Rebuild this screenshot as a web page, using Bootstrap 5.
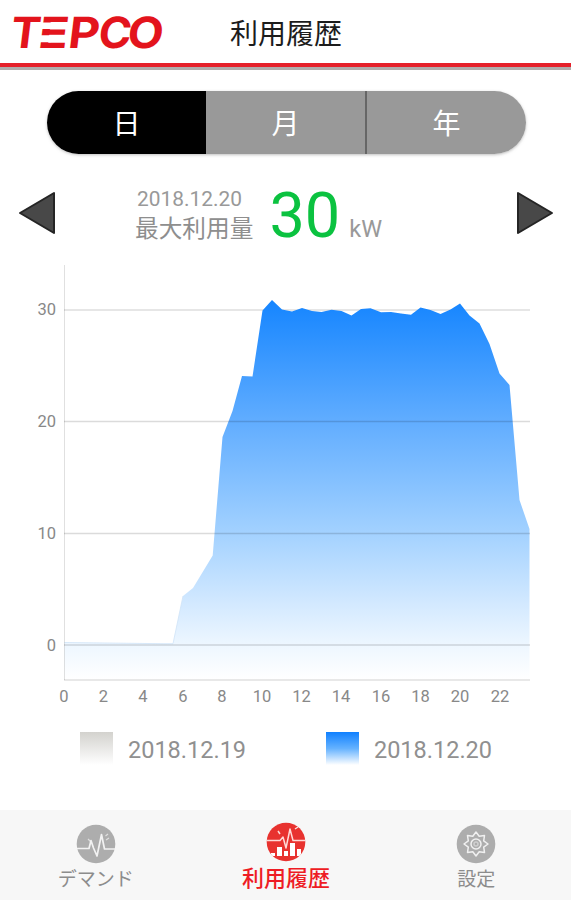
<!DOCTYPE html>
<html lang="ja">
<head>
<meta charset="utf-8">
<meta name="viewport" content="width=device-width, initial-scale=1">
<title>利用履歴</title>
<link href="https://cdn.jsdelivr.net/npm/bootstrap@5.3.0/dist/css/bootstrap.min.css" rel="stylesheet">
<style>
body{font-family:Roboto,"Noto Sans CJK JP",sans-serif;background:#fff;color:#999;height:900px;overflow:hidden}
.app-head{height:70px;border-bottom:3px solid #b0acac;background:#fff}
.head-in{height:67px;border-bottom:4px solid #e5202a;padding-left:12px}
.brand-mark{width:153px;height:60px}
.page-title{font-size:28px;line-height:1;color:#1c1c1c;margin-left:65px;padding-top:6px}
.period{height:63px;margin:21px 45px 0 47px;border-radius:32px;overflow:hidden;box-shadow:0 1px 3px #8888}
.period .btn{border:0;border-radius:0;background:#999;color:#fff;font-size:28px;line-height:1;flex:1 1 0;padding:5px 0 0}
.period .btn.active{background:#000;color:#fff}
.period .btn+.btn+.btn{border-left:2px solid #666}
.summary{height:106px;padding:12px 17px 0 18px}
.peak{padding-right:55px;margin-top:6px}
.peak-date{font-size:20.9px;line-height:25px;padding-left:2px}
.peak-label{font-size:23.7px;line-height:34px;color:#8e8e8e}
.peak-value{font-size:63px;line-height:64px;color:#0bc240;margin-left:16px}
.peak-unit{font-size:23.5px;line-height:30px;margin-left:9px;padding-top:26px}
.plot text{font-size:16.5px;fill:#888}
.legend-row{height:100px;padding:22px 79px 0 80px}
.swatch{width:33px;height:33px;margin-right:15px;background:linear-gradient(#d3d2ce,#fff)}
.swatch-now{background:linear-gradient(#0f80ff,#65b2ff 50%,#fff)}
.legend-text{font-size:23.5px;line-height:36px;color:#909090}
.tabs{height:90px;background:#f7f7f7}
.tab-item{color:#8c8c8c;font-size:19px;line-height:26px;padding:14px 0 0 1px;text-decoration:none}
.tab-item.active{color:#ee1c24;font-size:22px;font-weight:500;padding-top:12px}
.tab-item svg{width:40px;height:40px;margin-bottom:3px}
.tab-item.active svg{margin-bottom:4px}
</style>
</head>
<body class="d-flex flex-column">
<header class="app-head">
  <div class="head-in d-flex align-items-center">
    <svg class="brand-mark" viewBox="0 -12 153 60" overflow="visible" aria-label="TEPCO">
      <g transform="translate(0 34) skewX(-7)" font-family="Inter,sans-serif" font-weight="700" font-size="43" fill="#e3141c">
        <text x="-3" y="0" textLength="30" lengthAdjust="spacingAndGlyphs">T</text>
        <text x="25" y="0" textLength="30" lengthAdjust="spacingAndGlyphs">E</text>
        <path d="M24-25.500H38V-19H24ZM24-12.800H38V-5.800H24Z" fill="#fff"/>
        <text x="55" y="0" textLength="31" lengthAdjust="spacingAndGlyphs">P</text>
        <text x="85" y="0" textLength="33" lengthAdjust="spacingAndGlyphs">C</text>
        <text x="114" y="0" textLength="36" lengthAdjust="spacingAndGlyphs">O</text>
      </g>
    </svg>
    <h1 class="page-title mb-0 fw-normal">利用履歴</h1>
  </div>
</header>
<div class="period d-flex" role="group">
  <button class="btn active">日</button><button class="btn">月</button><button class="btn">年</button>
</div>
<section class="summary d-flex align-items-center justify-content-between">
  <svg width="38" height="44" viewBox="0 0 38 44"><path d="M2 22 36 2V42Z" fill="#484848" stroke="#252525" stroke-width="2" stroke-linejoin="round"/></svg>
  <div class="peak d-flex align-items-center">
    <div><div class="peak-date">2018.12.20</div><div class="peak-label">最大利用量</div></div>
    <div class="peak-value">30</div><div class="peak-unit">kW</div>
  </div>
  <svg width="38" height="44" viewBox="0 0 38 44"><path d="M36 22 2 2V42Z" fill="#484848" stroke="#252525" stroke-width="2" stroke-linejoin="round"/></svg>
</section>
<svg class="plot flex-shrink-0" width="571" height="450" viewBox="0 260 571 450">
  <defs><linearGradient id="fade" gradientUnits="userSpaceOnUse" x1="0" y1="300" x2="0" y2="680">
    <stop offset="0" stop-color="#1585ff"/><stop offset=".32" stop-color="#61adff"/><stop offset=".61" stop-color="#a2d1ff"/><stop offset=".8" stop-color="#d3e9ff"/><stop offset=".91" stop-color="#eef7ff"/><stop offset="1" stop-color="#fff"/>
  </linearGradient></defs>
  <path d="M64 310H530" stroke="#e6e6e6" stroke-width="2"/>
  <path fill="url(#fade)" d="M64.500 680V642.500L163 643.700H173L183 596 193 588 202.700 572 212.700 555.500 222.500 437 232.500 411 242 376 252.500 376.500 262.500 310.500 272 300 282 309.500 292 311.500 302 308 312 311 321.500 312 331.500 309.700 341.500 311 351.500 315.500 361 309 370.500 308.300 381 312.300 391 312 401 313.500 411 314.700 420.500 307.500 430.500 310 440.500 314 450.500 309.500 460 303.500 469.500 315.500 479.500 323.500 489.500 344 499.500 373.500 509.500 385 519.500 500 529.500 529V680Z"/>
  <path d="M64.500 642.500 163 643.700H173L183 596" fill="none" stroke="#cfe3f8" stroke-width=".8"/>
  <g fill="none" stroke="#000"><path d="M64 421.500H530M64 533.500H530M64 645H530" stroke-opacity=".14" stroke-width="1.500"/><path d="M64.500 265V680" stroke-opacity=".12"/><path d="M64 680H530" stroke-opacity=".12" stroke-width="1.500"/></g>
  <g text-anchor="end"><text x="56" y="315">30</text><text x="56" y="427">20</text><text x="56" y="539">10</text><text x="56" y="651">0</text></g>
  <g text-anchor="middle"><text x="64" y="702">0</text><text x="103.500" y="702">2</text><text x="143" y="702">4</text><text x="183" y="702">6</text><text x="222" y="702">8</text><text x="262" y="702">10</text><text x="301.500" y="702">12</text><text x="341" y="702">14</text><text x="381" y="702">16</text><text x="420.500" y="702">18</text><text x="460" y="702">20</text><text x="500" y="702">22</text></g>
</svg>
<div class="legend-row d-flex justify-content-between">
  <div class="d-flex"><span class="swatch"></span><span class="legend-text">2018.12.19</span></div>
  <div class="d-flex"><span class="swatch swatch-now"></span><span class="legend-text">2018.12.20</span></div>
</div>
<nav class="tabs d-flex mt-auto">
  <a class="tab-item d-flex flex-column align-items-center col-4" href="#">
    <svg viewBox="0 0 40 40"><circle cx="20" cy="20" r="19.300" fill="#adadad"/><g fill="none" stroke="#f2f2f2" stroke-width="1.700" stroke-linejoin="round"><path d="M1 24.500H13L15 16.500 17.500 24 21 32 25.500 10.500 28.500 25H39"/><path d="M12 15 15 18M29.500 12 32 10M30 16 33 14" stroke-width="1.300" stroke-opacity=".7"/></g></svg>
    <span>デマンド</span></a>
  <a class="tab-item active d-flex flex-column align-items-center col-4" href="#">
    <svg viewBox="0 0 40 40"><defs><clipPath id="disc"><circle cx="20" cy="20" r="19.300"/></clipPath></defs><circle cx="20" cy="20" r="19.300" fill="#e8322f"/><g clip-path="url(#disc)"><path d="M1 18.500H14L17 15 20 26 24 7 27 18.500H39M12 9 14 12M29 7 32 5" fill="none" stroke="#ffd9d6" stroke-width="1.500" stroke-linejoin="round"/><path d="M5 31H9V34H5ZM11 25H16V34H11ZM18 29H22V34H18ZM24 21H29V34H24ZM31 27H35V34H31Z" fill="#fff"/></g></svg>
    <span>利用履歴</span></a>
  <a class="tab-item d-flex flex-column align-items-center col-4" href="#">
    <svg viewBox="0 0 40 40"><circle cx="20" cy="20" r="19.300" fill="#adadad"/><g fill="none" stroke="#f0f0f0" stroke-width="1.500" stroke-linejoin="round"><path d="M20 8 23.200 12.300 28.500 11.500 27.700 16.800 32 20 27.700 23.200 28.500 28.500 23.200 27.700 20 32 16.800 27.700 11.500 28.500 12.300 23.200 8 20 12.300 16.800 11.500 11.500 16.800 12.300Z"/><circle cx="20" cy="20" r="5"/><circle cx="20" cy="20" r="2" stroke-opacity=".5"/></g></svg>
    <span>設定</span></a>
</nav>
<script src="https://cdn.jsdelivr.net/npm/bootstrap@5.3.0/dist/js/bootstrap.bundle.min.js"></script>
</body>
</html>
